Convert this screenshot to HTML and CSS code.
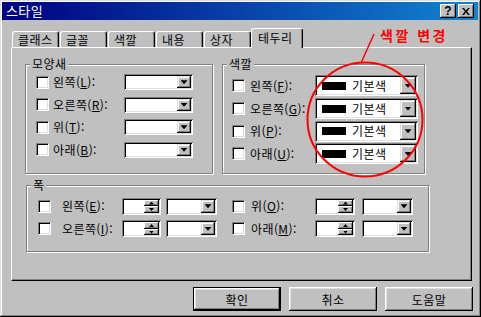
FILE: index.html
```html
<!DOCTYPE html>
<html lang="ko">
<head>
    <meta charset="UTF-8">
    <title>스타일</title>
    <link rel="stylesheet" href="styles.css">
</head>
<body>
    <div class="window">
        <div class="titlebar">
            <span class="title">스타일</span>
            <div class="title-buttons">
                <span class="tbtn">?</span>
                <span class="tbtn">
                    <svg width="8" height="7" viewBox="0 0 8 7"><path d="M0 0h2l2 2.5 2-2.5h2l-3 3.5 3 3.5h-2l-2-2.5-2 2.5h-2l3-3.5z" fill="#000"/></svg>
                </span>
            </div>
        </div>

        <div class="tabs">
            <div class="tab">클래스</div>
            <div class="tab">글꼴</div>
            <div class="tab">색깔</div>
            <div class="tab">내용</div>
            <div class="tab">상자</div>
            <div class="tab active">테두리</div>
        </div>

        <div class="panel">
            <div class="top-row">
                <div class="group style-group">
                    <span class="group-title">모양새</span>
                    <div class="rows">
                        <div class="row"><span class="check"></span><span class="label">왼쪽(<u>L</u>):</span><span class="combo"><span class="drop"></span></span></div>
                        <div class="row"><span class="check"></span><span class="label">오른쪽(<u>R</u>):</span><span class="combo"><span class="drop"></span></span></div>
                        <div class="row"><span class="check"></span><span class="label">위(<u>T</u>):</span><span class="combo"><span class="drop"></span></span></div>
                        <div class="row"><span class="check"></span><span class="label">아래(<u>B</u>):</span><span class="combo"><span class="drop"></span></span></div>
                    </div>
                </div>

                <div class="group color-group">
                    <span class="group-title">색깔</span>
                    <div class="rows">
                        <div class="row"><span class="check"></span><span class="label">왼쪽(<u>F</u>):</span><span class="combo color"><span class="swatch"></span><span class="value">기본색</span><span class="drop"></span></span></div>
                        <div class="row"><span class="check"></span><span class="label">오른쪽(<u>G</u>):</span><span class="combo color"><span class="swatch"></span><span class="value">기본색</span><span class="drop"></span></span></div>
                        <div class="row"><span class="check"></span><span class="label">위(<u>P</u>):</span><span class="combo color"><span class="swatch"></span><span class="value">기본색</span><span class="drop"></span></span></div>
                        <div class="row"><span class="check"></span><span class="label">아래(<u>U</u>):</span><span class="combo color"><span class="swatch"></span><span class="value">기본색</span><span class="drop"></span></span></div>
                    </div>
                </div>
            </div>

            <div class="group width-group">
                <span class="group-title">폭</span>
                <div class="rows">
                    <div class="row">
                        <div class="cell first">
                            <span class="check"></span><span class="label">왼쪽(<u>E</u>):</span>
                            <span class="spin"><span class="spin-field"></span><span class="spin-btns"><span class="up"></span><span class="down"></span></span></span>
                            <span class="combo small"><span class="drop"></span></span>
                        </div>
                        <div class="cell second">
                            <span class="check"></span><span class="label">위(<u>O</u>):</span>
                            <span class="spin"><span class="spin-field"></span><span class="spin-btns"><span class="up"></span><span class="down"></span></span></span>
                            <span class="combo small"><span class="drop"></span></span>
                        </div>
                    </div>
                    <div class="row">
                        <div class="cell first">
                            <span class="check"></span><span class="label">오른쪽(<u>I</u>):</span>
                            <span class="spin"><span class="spin-field"></span><span class="spin-btns"><span class="up"></span><span class="down"></span></span></span>
                            <span class="combo small"><span class="drop"></span></span>
                        </div>
                        <div class="cell second">
                            <span class="check"></span><span class="label">아래(<u>M</u>):</span>
                            <span class="spin"><span class="spin-field"></span><span class="spin-btns"><span class="up"></span><span class="down"></span></span></span>
                            <span class="combo small"><span class="drop"></span></span>
                        </div>
                    </div>
                </div>
            </div>
        </div>

        <div class="buttons">
            <button class="btn default">확인</button>
            <button class="btn">취소</button>
            <button class="btn">도움말</button>
        </div>

        <!-- red note drawn over the dialog -->
        <svg class="annotation" width="481" height="317" viewBox="0 0 481 317">
            <text class="note" x="380" y="41">색깔 변경</text>
            <path d="M374 34 L361 63" stroke="#f00" stroke-width="1.5" fill="none"/>
            <ellipse cx="365" cy="119.5" rx="57.5" ry="57" stroke="#f00" stroke-width="2" fill="none"/>
        </svg>
    </div>
</body>
</html>
```

FILE: styles.css
```css
body {
    margin: 0;
    font-family: "Noto Sans CJK KR", "Noto Sans", sans-serif;
    font-size: 12px;
    letter-spacing: 0.4px;
    color: #000;
}
.window {
    position: relative;
    width: 481px;
    height: 317px;
    box-sizing: border-box;
    padding: 2px 3px 3px 2px;
    background: #c0c0c0;
    box-shadow: inset -1px -1px #000, inset 1px 1px #dfdfdf, inset -2px -2px #808080, inset 2px 2px #fff;
}
.titlebar {
    height: 18px;
    display: flex;
    align-items: center;
    justify-content: space-between;
    padding: 0 4px;
    background: linear-gradient(90deg, #000080, #1084d0);
    color: #fff;
    font-size: 13px;
}
.title {
    line-height: 18px;
}
.title-buttons {
    display: flex;
    gap: 2px;
}
.tbtn {
    width: 16px;
    height: 14px;
    box-sizing: border-box;
    display: flex;
    align-items: center;
    justify-content: center;
    background: #c0c0c0;
    color: #000;
    font-family: "Liberation Sans", Arial, sans-serif;
    font-weight: bold;
    font-size: 12px;
    line-height: 14px;
    box-shadow: inset -1px -1px #000, inset 1px 1px #fff, inset -2px -2px #808080;
}

/* tabs */
.tabs {
    display: flex;
    align-items: flex-end;
    height: 19px;
    margin-top: 8px;
    padding-left: 10px;
}
.tab {
    width: 47px;
    height: 16px;
    box-sizing: border-box;
    margin-right: 1px;
    padding-left: 5px;
    line-height: 15px;
    border-top: 1px solid #fff;
    border-left: 1px solid #fff;
    border-right: 1px solid #000;
    border-radius: 3px 3px 0 0;
    box-shadow: inset -1px 0 #808080;
}
.tab.active {
    position: relative;
    z-index: 1;
    width: 52px;
    height: 20px;
    margin-left: -1px;
    margin-bottom: -1px;
    padding-left: 6px;
    line-height: 17px;
    background: #c0c0c0;
}
.panel {
    width: 461px;
    height: 234px;
    box-sizing: border-box;
    margin-left: 9px;
    padding: 16px 0 0 13px;
    border-top: 1px solid #fff;
    border-left: 1px solid #fff;
    border-right: 1px solid #000;
    border-bottom: 1px solid #000;
    box-shadow: inset -1px -1px #808080;
}

/* group boxes */
.top-row {
    display: flex;
    gap: 9px;
}
.group {
    display: flex;
    flex-direction: column;
    box-sizing: border-box;
    border: 1px solid #808080;
    box-shadow: inset 1px 1px #fff, 1px 1px #fff;
}
.group-title {
    align-self: flex-start;
    height: 12px;
    line-height: 12px;
    margin: -7px 0 0 4px;
    padding: 0 2px;
    background: #c0c0c0;
}
.style-group {
    width: 188px;
    height: 110px;
}
.color-group {
    width: 203px;
    height: 110px;
}
.width-group {
    width: 403px;
    height: 67px;
    margin: 11px 0 0 1px;
}
.rows {
    padding-top: 1px;
}
.row {
    display: flex;
    align-items: center;
    height: 22.5px;
}
.style-group .rows {
    padding-left: 10px;
}
.color-group .rows {
    padding: 4.5px 0 0 9px;
}
.color-group .row {
    height: 22.7px;
}
.width-group .rows {
    padding-top: 4px;
}
.label {
    white-space: nowrap;
    line-height: 12px;
}
.style-group .label {
    width: 71px;
    margin-left: 4px;
}
.color-group .label {
    width: 65px;
    margin-left: 5px;
}

/* controls */
.check {
    width: 13px;
    height: 13px;
    box-sizing: border-box;
    flex: none;
    background: #fff;
    border: 1px solid;
    border-color: #808080 #fff #fff #808080;
    box-shadow: inset 1px 1px #000, inset -1px -1px #dfdfdf;
}
.combo {
    display: flex;
    align-items: stretch;
    width: 69px;
    height: 16px;
    box-sizing: border-box;
    padding: 2px;
    background: #fff;
    box-shadow: inset 1px 1px #808080, inset -1px -1px #fff, inset 2px 2px #000, inset -2px -2px #dfdfdf;
}
.combo.color {
    width: 103px;
    height: 21px;
    align-items: center;
}
.combo.small {
    width: 51px;
    height: 17px;
}
.drop {
    position: relative;
    width: 14px;
    margin-left: auto;
    align-self: stretch;
    display: flex;
    align-items: center;
    justify-content: center;
    background: #c0c0c0;
    box-shadow: inset -1px -1px #000, inset 1px 1px #dfdfdf, inset -2px -2px #808080, inset 2px 2px #fff;
}
.combo.color .drop {
    width: 16px;
}
.drop::after {
    content: "";
    width: 7px;
    height: 4px;
    background: #000;
    clip-path: polygon(0 0, 100% 0, 50% 100%);
}
.swatch {
    width: 24px;
    height: 8px;
    margin-left: 5px;
    background: #000;
}
.value {
    margin-left: 6px;
    line-height: 12px;
}
.spin {
    display: flex;
    width: 39px;
    height: 17px;
    box-sizing: border-box;
    padding: 2px;
    background: #fff;
    box-shadow: inset 1px 1px #808080, inset -1px -1px #fff, inset 2px 2px #000, inset -2px -2px #dfdfdf;
}
.spin-field {
    flex: 1;
}
.spin-btns {
    display: flex;
    flex-direction: column;
    width: 15px;
}
.spin-btns span {
    flex: 1;
    display: flex;
    align-items: center;
    justify-content: center;
    background: #c0c0c0;
    box-shadow: inset -1px -1px #000, inset 1px 1px #fff, inset -2px -2px #808080;
}
.spin-btns span::after {
    content: "";
    width: 5px;
    height: 3px;
    background: #000;
}
.spin-btns .up::after {
    clip-path: polygon(50% 0, 100% 100%, 0 100%);
}
.spin-btns .down::after {
    clip-path: polygon(0 0, 100% 0, 50% 100%);
}
.cell {
    display: flex;
    align-items: center;
}
.cell.first {
    padding-left: 11px;
}
.cell.first .label {
    width: 60px;
    margin-left: 11px;
}
.cell.first .combo {
    margin-left: 5px;
}
.cell.second {
    margin-left: 15px;
}
.cell.second .label {
    width: 64px;
    margin-left: 6px;
}
.cell.second .spin {
    width: 40px;
}
.cell.second .combo {
    margin-left: 7px;
}

/* dialog buttons */
.buttons {
    display: flex;
    justify-content: flex-end;
    gap: 8px;
    margin-top: 6px;
    padding-right: 5px;
}
.btn {
    width: 88px;
    height: 24px;
    padding: 0;
    border: none;
    background: #c0c0c0;
    font-family: inherit;
    font-size: 12px;
    letter-spacing: inherit;
    color: #000;
    box-shadow: inset -1px -1px #000, inset 1px 1px #fff, inset -2px -2px #808080, inset 2px 2px #dfdfdf;
}
.btn.default {
    border: 1px solid #000;
}
.annotation {
    position: absolute;
    left: 0;
    top: 0;
    pointer-events: none;
}
.note {
    font-family: "Noto Sans CJK KR", sans-serif;
    font-size: 14px;
    font-weight: bold;
    letter-spacing: 2.5px;
    fill: #f00;
}
```
